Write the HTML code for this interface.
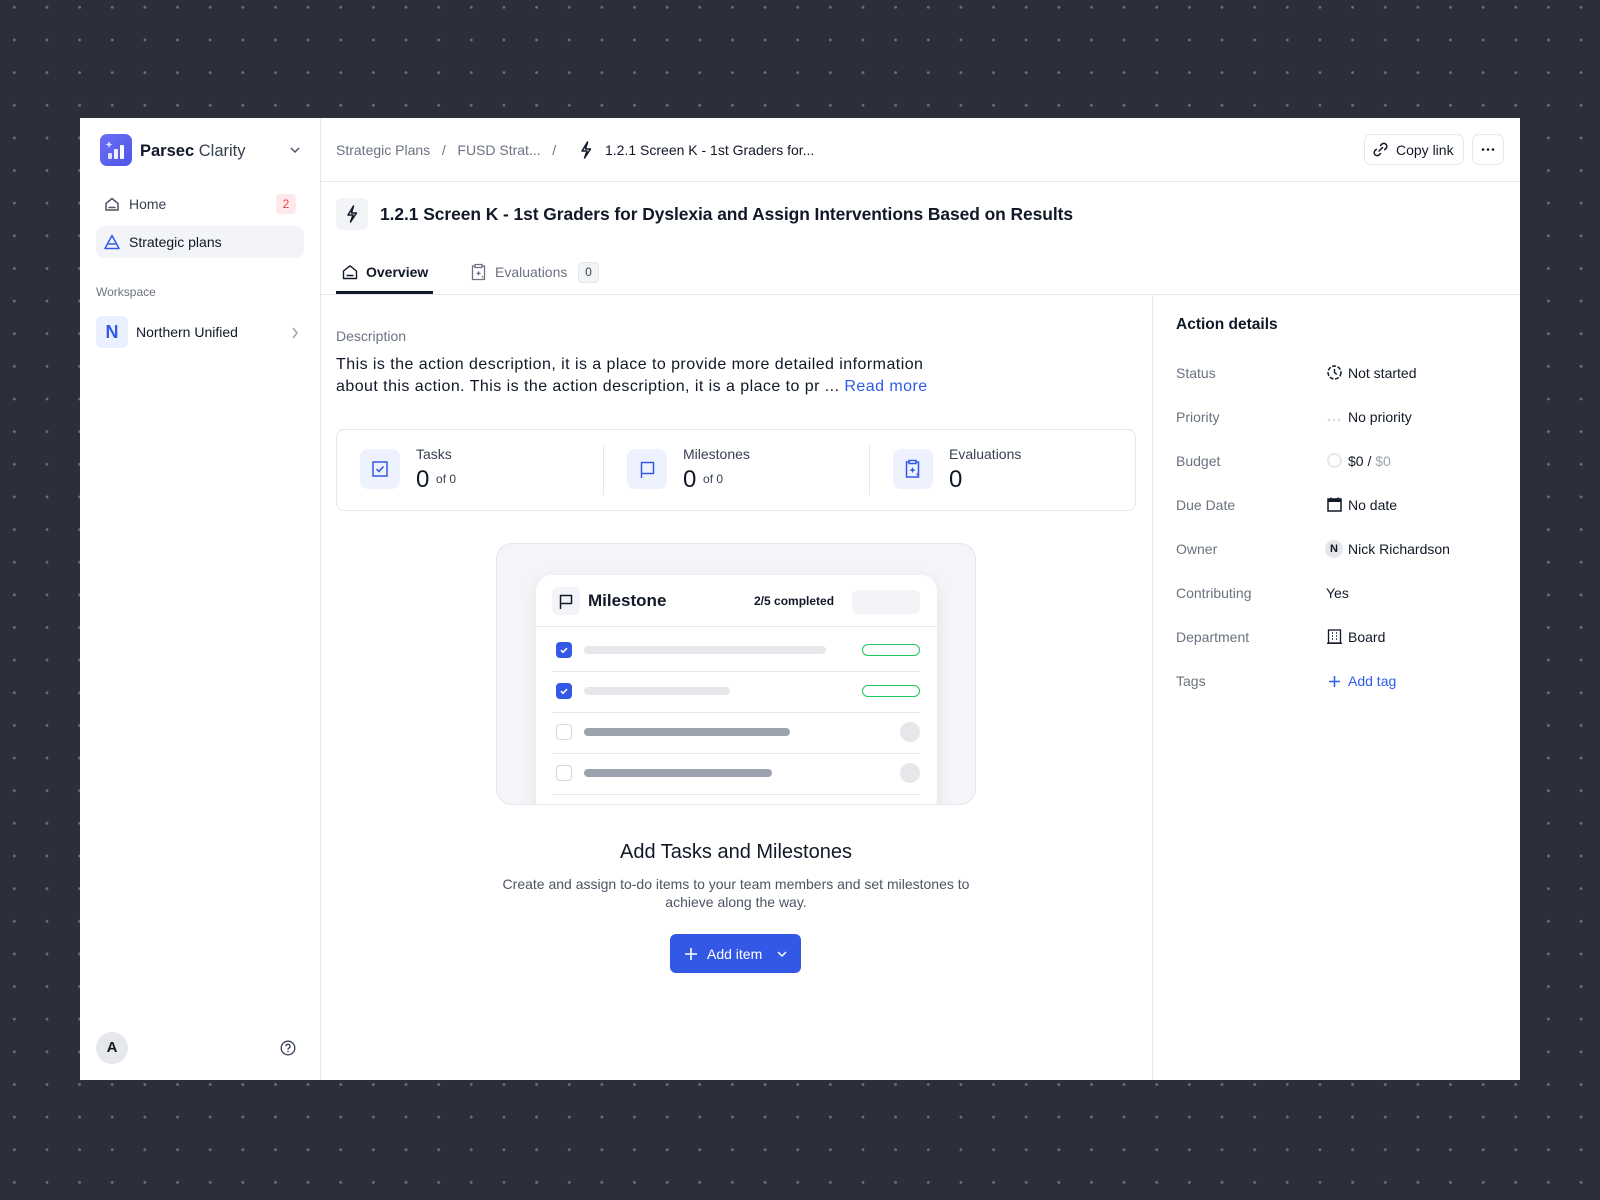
<!DOCTYPE html>
<html><head><meta charset="utf-8"><style>
*{box-sizing:border-box;margin:0;padding:0}
body{width:1600px;height:1200px;background:#2b2f3a;background-image:radial-gradient(circle,#6b7080 1.2px,transparent 1.6px);background-size:32.65px 32.65px;background-position:-2px -9px;font-family:"Liberation Sans",sans-serif;color:#111827;position:relative;overflow:hidden}
.a{position:absolute}
.panel{left:80px;top:118px;width:1440px;height:962px;background:#fff}
.t{position:absolute;white-space:nowrap;line-height:1}
.g{color:#6b7280}
svg{position:absolute;overflow:visible}
.lbl{font-size:14px;color:#6b7280}
.val{font-size:14px;color:#111827}
</style></head><body>
<div class="a panel"></div>
<!-- sidebar -->
<div class="a" style="left:320px;top:118px;width:1px;height:962px;background:#e5e7eb"></div>
<div class="a" style="left:100px;top:134px;width:32px;height:32px;border-radius:7px;background:linear-gradient(135deg,#6b6ff5,#4f56e8)"></div>
<svg style="left:100px;top:134px" width="32" height="32"><rect x="8" y="19" width="4" height="6" rx="1" fill="#dfe2ff"/><rect x="14" y="15" width="4" height="10" rx="1" fill="#eef0ff"/><rect x="20" y="11" width="4" height="14" rx="1" fill="#fff"/><path d="M9 7l1 2.5 2.5 1-2.5 1-1 2.5-1-2.5-2.5-1 2.5-1z" fill="#fff" opacity=".8"/></svg>
<div class="t" style="left:140px;top:143px;font-size:16.5px"><b>Parsec</b> <span style="color:#374151">Clarity</span></div>
<svg style="left:290px;top:146px" width="10" height="8"><path d="M1 2l4 4 4-4" stroke="#4b5563" stroke-width="1.5" fill="none"/></svg>
<svg style="left:105px;top:197px" width="14" height="14"><path d="M1 6.5L7 1.5l6 5V13H1z M3.5 10.5h7" stroke="#4b5563" stroke-width="1.5" fill="none" stroke-linejoin="round"/></svg>
<div class="t" style="left:129px;top:197px;font-size:14px;color:#374151">Home</div>
<div class="a" style="left:276px;top:194px;width:20px;height:20px;border-radius:4px;background:#fde8ea;color:#e5484d;font-size:12px;text-align:center;line-height:20px">2</div>
<div class="a" style="left:96px;top:226px;width:208px;height:32px;border-radius:8px;background:#f3f4f7"></div>
<svg style="left:104px;top:234px" width="16" height="16"><path d="M8 1.5L15 14.5H1z M4.3 10h7.4" stroke="#3358e6" stroke-width="1.5" fill="none" stroke-linejoin="round"/></svg>
<div class="t" style="left:129px;top:235px;font-size:14px;color:#111827">Strategic plans</div>
<div class="t" style="left:96px;top:286px;font-size:12px;color:#6b7280">Workspace</div>
<div class="a" style="left:96px;top:316px;width:32px;height:32px;border-radius:6px;background:#eaf0ff;color:#3358e6;font-size:18px;font-weight:bold;text-align:center;line-height:32px">N</div>
<div class="t" style="left:136px;top:325px;font-size:14px;color:#111827">Northern Unified</div>
<svg style="left:291px;top:327px" width="8" height="12"><path d="M2 1l4 5-4 5" stroke="#9ca3af" stroke-width="1.5" fill="none"/></svg>
<div class="a" style="left:96px;top:1032px;width:32px;height:32px;border-radius:50%;background:#e5e7eb;font-size:15px;font-weight:bold;text-align:center;line-height:32px">A</div>
<svg style="left:280px;top:1040px" width="16" height="16"><circle cx="8" cy="8" r="6.8" stroke="#374151" stroke-width="1.3" fill="none"/><path d="M6 6.3a2 2 0 1 1 2.6 1.9c-.5.2-.6.5-.6 1v.4" stroke="#374151" stroke-width="1.3" fill="none"/><circle cx="8" cy="11.4" r=".8" fill="#374151"/></svg>
<!-- header -->
<div class="a" style="left:321px;top:181px;width:1199px;height:1px;background:#e5e7eb"></div>
<div class="t g" style="left:336px;top:143px;font-size:14px">Strategic Plans &nbsp;&nbsp;/&nbsp;&nbsp; FUSD Strat... &nbsp;&nbsp;/</div>
<svg style="left:580px;top:141px" width="12" height="18"><path d="M7.5 1L2 10h5l-2.5 7L10.5 8H5.5z" fill="none" stroke="#111827" stroke-width="1.5" stroke-linejoin="round"/></svg>
<div class="t" style="left:605px;top:143px;font-size:14px;color:#111827">1.2.1 Screen K - 1st Graders for...</div>
<div class="a" style="left:1364px;top:134px;width:100px;height:31px;border:1px solid #e5e7eb;border-radius:7px"></div>
<svg style="left:1372px;top:141px" width="17" height="17"><path d="M7 10l3.5-3.5 M8.5 4.5l1.5-1.5a3 3 0 0 1 4.2 4.2l-1.5 1.5 M8.5 12.5l-1.5 1.5a3 3 0 0 1-4.2-4.2l1.5-1.5" stroke="#111827" stroke-width="1.5" fill="none" stroke-linecap="round"/></svg>
<div class="t" style="left:1396px;top:143px;font-size:14px">Copy link</div>
<div class="a" style="left:1472px;top:134px;width:32px;height:31px;border:1px solid #e5e7eb;border-radius:7px"></div>
<svg style="left:1472px;top:134px" width="32" height="31"><circle cx="11" cy="15.5" r="1.3" fill="#111827"/><circle cx="16" cy="15.5" r="1.3" fill="#111827"/><circle cx="21" cy="15.5" r="1.3" fill="#111827"/></svg>
<!-- title -->
<div class="a" style="left:336px;top:198px;width:32px;height:32px;border-radius:6px;background:#f3f4f7"></div>
<svg style="left:346px;top:205px" width="12" height="18"><path d="M7.5 1L2 10h5l-2.5 7L10.5 8H5.5z" fill="none" stroke="#111827" stroke-width="1.5" stroke-linejoin="round"/></svg>
<div class="t" style="left:380px;top:206px;font-size:17.4px;font-weight:bold;letter-spacing:-0.05px">1.2.1 Screen K - 1st Graders for Dyslexia and Assign Interventions Based on Results</div>
<!-- tabs -->
<svg style="left:342px;top:264px" width="16" height="16"><path d="M1.5 7L8 1.8 14.5 7V14.5h-13z M4.5 11.5h7" stroke="#111827" stroke-width="1.4" fill="none" stroke-linejoin="round"/></svg>
<div class="t" style="left:366px;top:265px;font-size:14px;font-weight:bold;color:#111827">Overview</div>
<div class="a" style="left:336px;top:291px;width:97px;height:3px;background:#111827"></div>
<svg style="left:470px;top:263px" width="17" height="18"><path d="M5 3H2.5v13.5h12V3H12 M5 1.5h7v3H5z" stroke="#6b7280" stroke-width="1.3" fill="none"/><path d="M8.5 7.5l.8 2 2 .8-2 .8-.8 2-.8-2-2-.8 2-.8z M12.5 12.5l.4 1 1 .4-1 .4-.4 1-.4-1-1-.4 1-.4z" fill="#6b7280"/></svg>
<div class="t g" style="left:495px;top:265px;font-size:14px">Evaluations</div>
<div class="a" style="left:578px;top:262px;width:21px;height:21px;border-radius:4px;background:#f3f4f7;border:1px solid #e5e7eb;font-size:12px;text-align:center;line-height:19px;color:#374151">0</div>
<div class="a" style="left:321px;top:294px;width:1199px;height:1px;background:#e5e7eb"></div>
<div class="a" style="left:1152px;top:295px;width:1px;height:785px;background:#e5e7eb"></div>
<!-- description -->
<div class="t lbl" style="left:336px;top:329px">Description</div>
<div class="a" style="left:336px;top:354px;font-size:16px;line-height:22px;color:#111827;width:640px;letter-spacing:0.45px;white-space:nowrap">This is the action description, it is a place to provide more detailed information<br>about this action. This is the action description, it is a place to pr ... <span style="color:#2f5be8">Read more</span></div>
<!-- stats -->
<div class="a" style="left:336px;top:429px;width:800px;height:82px;border:1px solid #e5e7eb;border-radius:8px"></div>
<div class="a" style="left:603px;top:445px;width:1px;height:50px;background:#e5e7eb"></div>
<div class="a" style="left:869px;top:445px;width:1px;height:50px;background:#e5e7eb"></div>
<div class="a" style="left:360px;top:449px;width:40px;height:40px;border-radius:8px;background:#eef2ff"></div>
<svg style="left:372px;top:461px" width="16" height="16"><rect x="1" y="1" width="14" height="14" stroke="#3358e6" stroke-width="1.5" fill="none"/><path d="M4.5 8l2.5 2.5 4.5-5" stroke="#3358e6" stroke-width="1.5" fill="none"/></svg>
<div class="t" style="left:416px;top:447px;font-size:14px;color:#374151">Tasks</div>
<div class="t" style="left:416px;top:468px;font-size:24px">0 <span style="font-size:12px;color:#374151;vertical-align:4px">of 0</span></div>
<div class="a" style="left:627px;top:449px;width:40px;height:40px;border-radius:8px;background:#eef2ff"></div>
<svg style="left:640px;top:461px" width="16" height="17"><path d="M1.5 17V1.5h12v11h-12" stroke="#3358e6" stroke-width="1.5" fill="none" stroke-linejoin="round"/></svg>
<div class="t" style="left:683px;top:447px;font-size:14px;color:#374151">Milestones</div>
<div class="t" style="left:683px;top:468px;font-size:24px">0 <span style="font-size:12px;color:#374151;vertical-align:4px">of 0</span></div>
<div class="a" style="left:893px;top:449px;width:40px;height:40px;border-radius:8px;background:#eef2ff"></div>
<svg style="left:904px;top:459px" width="18" height="20"><path d="M5 3H2.5v15h12V3H12 M5 1.5h7v3H5z" stroke="#3358e6" stroke-width="1.5" fill="none"/><path d="M8.5 8l.9 2.2 2.2.9-2.2.9-.9 2.2-.9-2.2-2.2-.9 2.2-.9z M13.5 13.5l.5 1.2 1.2.5-1.2.5-.5 1.2-.5-1.2-1.2-.5 1.2-.5z" fill="#3358e6"/></svg>
<div class="t" style="left:949px;top:447px;font-size:14px;color:#374151">Evaluations</div>
<div class="t" style="left:949px;top:468px;font-size:24px">0</div>
<!-- illustration -->
<div class="a" style="left:496px;top:543px;width:480px;height:262px;border-radius:16px;background:#f3f5f8;border:1px solid #e5e7eb;overflow:hidden">
 <div class="a" style="left:39px;top:31px;width:401px;height:240px;background:#fff;border-radius:16px;box-shadow:0 4px 16px rgba(16,24,40,.08)">
  <div class="a" style="left:16px;top:12px;width:28px;height:28px;border-radius:6px;background:#f3f4f7"></div>
  <svg style="left:23px;top:19px" width="14" height="15"><path d="M1.5 15V1.5h11v8h-11" stroke="#111827" stroke-width="1.5" fill="none" stroke-linejoin="round"/></svg>
  <div class="t" style="left:52px;top:17px;font-size:17px;font-weight:bold;color:#111827">Milestone</div>
  <div class="t" style="left:218px;top:20px;font-size:12px;font-weight:bold">2/5 completed</div>
  <div class="a" style="left:316px;top:15px;width:68px;height:24px;border-radius:6px;background:#f3f4f7"></div>
  <div class="a" style="left:0;top:51px;width:401px;height:1px;background:#e5e7eb"></div>
  <div class="a" style="left:20px;top:67px;width:16px;height:16px;border-radius:4px;background:#3358e6"></div>
  <svg style="left:20px;top:67px" width="16" height="16"><path d="M5 8.2l2 2 4-4" stroke="#fff" stroke-width="1.6" fill="none"/></svg>
  <div class="a" style="left:48px;top:71px;width:242px;height:8px;border-radius:4px;background:#e5e7eb"></div>
  <div class="a" style="left:326px;top:69px;width:58px;height:12px;border-radius:6px;border:1.3px solid #22c55e"></div>
  <div class="a" style="left:16px;top:96px;width:368px;height:1px;background:#e5e7eb"></div>
  <div class="a" style="left:20px;top:108px;width:16px;height:16px;border-radius:4px;background:#3358e6"></div>
  <svg style="left:20px;top:108px" width="16" height="16"><path d="M5 8.2l2 2 4-4" stroke="#fff" stroke-width="1.6" fill="none"/></svg>
  <div class="a" style="left:48px;top:112px;width:146px;height:8px;border-radius:4px;background:#e5e7eb"></div>
  <div class="a" style="left:326px;top:110px;width:58px;height:12px;border-radius:6px;border:1.3px solid #22c55e"></div>
  <div class="a" style="left:16px;top:137px;width:368px;height:1px;background:#e5e7eb"></div>
  <div class="a" style="left:20px;top:149px;width:16px;height:16px;border-radius:4px;border:1.3px solid #d1d5db"></div>
  <div class="a" style="left:48px;top:153px;width:206px;height:8px;border-radius:4px;background:#9ca3af"></div>
  <div class="a" style="left:364px;top:147px;width:20px;height:20px;border-radius:50%;background:#e5e7eb"></div>
  <div class="a" style="left:16px;top:178px;width:368px;height:1px;background:#e5e7eb"></div>
  <div class="a" style="left:20px;top:190px;width:16px;height:16px;border-radius:4px;border:1.3px solid #d1d5db"></div>
  <div class="a" style="left:48px;top:194px;width:188px;height:8px;border-radius:4px;background:#9ca3af"></div>
  <div class="a" style="left:364px;top:188px;width:20px;height:20px;border-radius:50%;background:#e5e7eb"></div>
  <div class="a" style="left:16px;top:219px;width:368px;height:1px;background:#e5e7eb"></div>
 </div>
</div>
<div class="a" style="left:436px;top:841px;width:600px;text-align:center;font-size:20px;color:#111827">Add Tasks and Milestones</div>
<div class="a" style="left:436px;top:875px;width:600px;text-align:center;font-size:14px;line-height:18px;color:#4b5563">Create and assign to-do items to your team members and set milestones to<br>achieve along the way.</div>
<div class="a" style="left:670px;top:934px;width:131px;height:39px;border-radius:6px;background:#3358e6"></div>
<svg style="left:684px;top:947px" width="14" height="14"><path d="M7 1v12M1 7h12" stroke="#fff" stroke-width="1.6"/></svg>
<div class="t" style="left:707px;top:947px;font-size:14px;color:#fff">Add item</div>
<svg style="left:777px;top:950px" width="10" height="8"><path d="M1 2l4 4 4-4" stroke="#fff" stroke-width="1.5" fill="none"/></svg>
<!-- right panel -->
<div class="t" style="left:1176px;top:317px;font-size:15.5px;font-weight:bold">Action details</div>
<div class="t lbl" style="left:1176px;top:366px">Status</div>
<div class="t lbl" style="left:1176px;top:410px">Priority</div>
<div class="t lbl" style="left:1176px;top:454px">Budget</div>
<div class="t lbl" style="left:1176px;top:498px">Due Date</div>
<div class="t lbl" style="left:1176px;top:542px">Owner</div>
<div class="t lbl" style="left:1176px;top:586px">Contributing</div>
<div class="t lbl" style="left:1176px;top:630px">Department</div>
<div class="t lbl" style="left:1176px;top:674px">Tags</div>
<svg style="left:1327px;top:365px" width="15" height="15"><circle cx="7.5" cy="7.5" r="6.5" stroke="#111827" stroke-width="1.5" fill="none" stroke-dasharray="4 1.6"/><path d="M7.5 4v3.5l2.3 2" stroke="#111827" stroke-width="1.4" fill="none"/></svg>
<div class="t val" style="left:1348px;top:366px">Not started</div>
<svg style="left:1327px;top:418px" width="16" height="4"><circle cx="2" cy="2" r="1.2" fill="#d1d5db"/><circle cx="7" cy="2" r="1.2" fill="#d1d5db"/><circle cx="12" cy="2" r="1.2" fill="#d1d5db"/></svg>
<div class="t val" style="left:1348px;top:410px">No priority</div>
<div class="a" style="left:1327px;top:453px;width:15px;height:15px;border-radius:50%;border:2px solid #e5e7eb"></div>
<div class="t val" style="left:1348px;top:454px">$0 / <span style="color:#9ca3af">$0</span></div>
<svg style="left:1327px;top:497px" width="15" height="15"><rect x="1" y="2" width="13" height="12" stroke="#111827" stroke-width="1.5" fill="none"/><rect x="1" y="2" width="13" height="3" fill="#111827"/><path d="M4 0.5v2.5M11 0.5v2.5" stroke="#111827" stroke-width="1.5"/></svg>
<div class="t val" style="left:1348px;top:498px">No date</div>
<div class="a" style="left:1325px;top:540px;width:18px;height:18px;border-radius:50%;background:#e5e7eb;font-size:11px;font-weight:bold;text-align:center;line-height:18px">N</div>
<div class="t val" style="left:1348px;top:542px">Nick Richardson</div>
<div class="t val" style="left:1326px;top:586px">Yes</div>
<svg style="left:1327px;top:629px" width="15" height="15"><rect x="1.5" y="1" width="12" height="13" stroke="#111827" stroke-width="1.3" fill="none"/><path d="M0 14.3h15" stroke="#111827" stroke-width="1.3"/><path d="M5 4h1M9 4h1M5 7h1M9 7h1M5 10h1M9 10h1" stroke="#111827" stroke-width="1.4"/></svg>
<div class="t val" style="left:1348px;top:630px">Board</div>
<svg style="left:1328px;top:675px" width="13" height="13"><path d="M6.5 1v11M1 6.5h11" stroke="#2f5be8" stroke-width="1.5"/></svg>
<div class="t" style="left:1348px;top:674px;font-size:14px;color:#2f5be8">Add tag</div>
</body></html>
